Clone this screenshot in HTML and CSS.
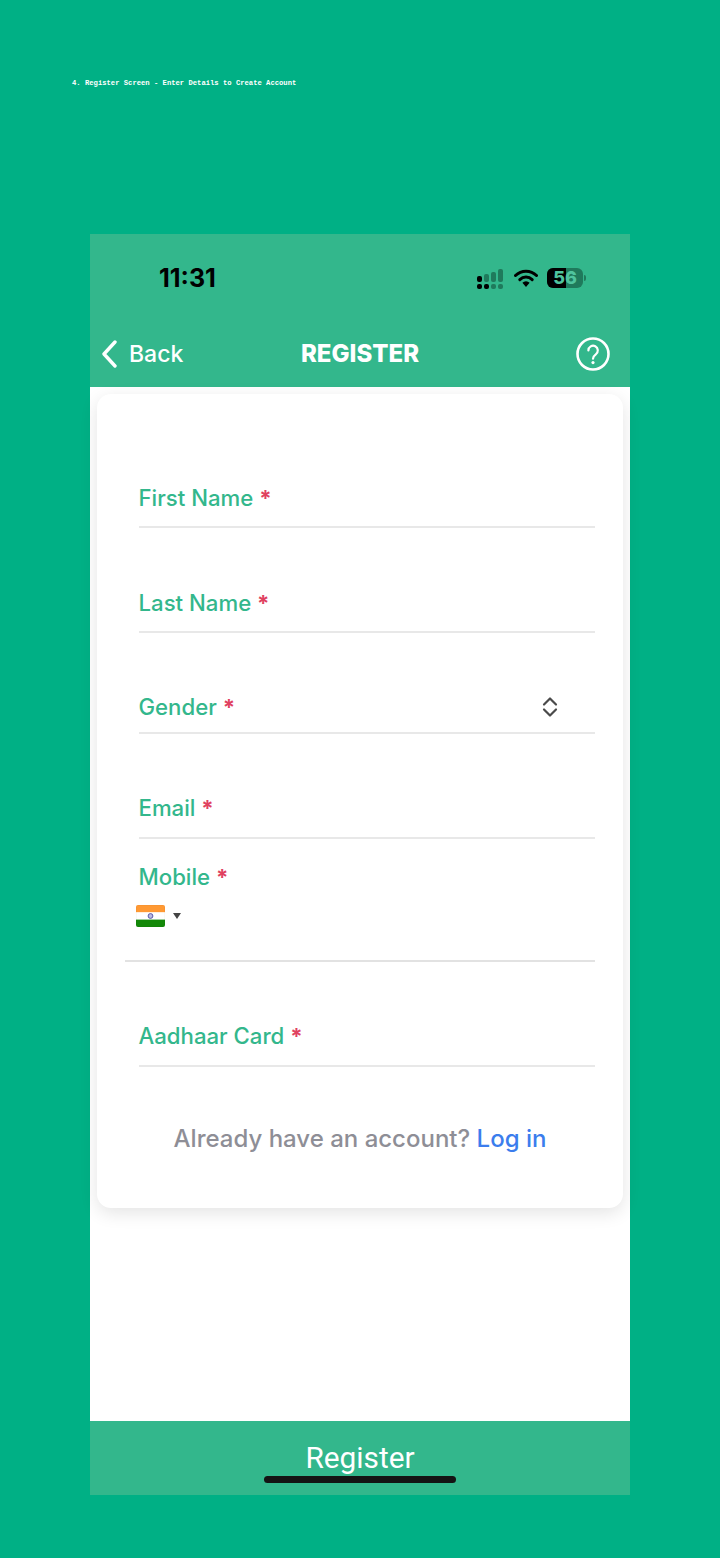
FILE: index.html
```html
<!DOCTYPE html>
<html>
<head>
	<title>Register</title>
	<link rel="stylesheet" href="styles.css">
</head>
<body>
	<p class="caption">4. Register Screen - Enter Details to Create Account</p>
	<div class="phone">
		<div class="topbar">
			<div class="status">
				<span class="time">11:31</span>
				<div class="status-icons">
					<svg class="signal" width="28" height="20" viewBox="0 0 28 20">
						<rect x="0" y="7" width="5" height="6" rx="2" fill="#000"/>
						<rect x="0" y="15" width="5" height="5" rx="2" fill="#000"/>
						<rect x="7" y="15" width="5" height="5" rx="2" fill="#000"/>
						<rect x="7" y="5" width="5" height="8" rx="2" fill="#1f7a5c"/>
						<rect x="14" y="3" width="5" height="10" rx="2" fill="#1f7a5c"/>
						<rect x="21" y="0" width="5" height="13" rx="2" fill="#1f7a5c"/>
						<rect x="14" y="15" width="5" height="5" rx="2" fill="#1f7a5c"/>
						<rect x="21" y="15" width="5" height="5" rx="2" fill="#1f7a5c"/>
					</svg>
					<svg class="wifi" width="24" height="20" viewBox="0 0 24 20">
						<path d="M1.5 7.5a15 15 0 0 1 21 0" fill="none" stroke="#000" stroke-width="3" stroke-linecap="round"/>
						<path d="M5.8 11.6a9 9 0 0 1 12.4 0" fill="none" stroke="#000" stroke-width="3" stroke-linecap="round"/>
						<path d="M8.4 14.8 12 19l3.6-4.2a5 5 0 0 0-7.2 0z" fill="#000"/>
					</svg>
					<div class="battery">
						<div class="battery-body">
							<span class="battery-level"></span>
							<span class="battery-text">56</span>
						</div>
						<span class="battery-tip"></span>
					</div>
				</div>
			</div>
			<div class="nav">
				<div class="back">
					<svg width="16" height="28" viewBox="0 0 16 28">
						<path d="M14 2 3 14l11 12" fill="none" stroke="#fff" stroke-width="3.4" stroke-linecap="round" stroke-linejoin="round"/>
					</svg>
					<span>Back</span>
				</div>
				<h1 class="title">REGISTER</h1>
				<svg class="help" width="34" height="36" viewBox="0 0 34 36">
					<circle cx="17" cy="18" r="15.5" fill="none" stroke="#fff" stroke-width="2.6"/>
					<path d="M12.4 14.4a4.7 4.7 0 1 1 7.4 3.9c-1.8 1.3-2.8 2.2-2.8 4.4" fill="none" stroke="#fff" stroke-width="2.2" stroke-linecap="round"/>
					<circle cx="17" cy="26.6" r="1.6" fill="#fff"/>
				</svg>
			</div>
		</div>
		<div class="content">
			<div class="card">
				<div class="field field-first"><label>First Name <b>*</b></label></div>
				<div class="field field-low"><label>Last Name <b>*</b></label></div>
				<div class="field field-gender">
					<label>Gender <b>*</b></label>
					<svg class="updown" width="16" height="22" viewBox="0 0 16 22">
						<path d="M2 8.5 8 2.5l6 6M2 13.5l6 6 6-6" fill="none" stroke="#4a4a4a" stroke-width="2.2" stroke-linecap="round" stroke-linejoin="round"/>
					</svg>
				</div>
				<div class="field"><label>Email <b>*</b></label></div>
				<div class="mobile">
					<label>Mobile <b>*</b></label>
					<div class="country">
						<svg class="flag" width="29" height="22" viewBox="0 0 29 22">
							<rect width="29" height="7.4" fill="#ff9933"/>
							<rect y="7.4" width="29" height="7.2" fill="#fff"/>
							<rect y="14.6" width="29" height="7.4" fill="#138808"/>
							<circle cx="14.5" cy="11" r="2.4" fill="#b9b9e0" stroke="#5a5aa8" stroke-width="1"/>
							<rect x="0.25" y="0.25" width="28.5" height="21.5" rx="1.5" fill="none" stroke="#000" stroke-opacity="0.08" stroke-width="0.5"/>
						</svg>
						<span class="arrow"></span>
					</div>
				</div>
				<div class="field"><label>Aadhaar Card <b>*</b></label></div>
				<p class="login">Already have an account? <a>Log in</a></p>
			</div>
		</div>
		<div class="footer">
			<span>Register</span>
			<div class="home-bar"></div>
		</div>
	</div>
</body>
</html>
```

FILE: styles.css
```css
body{
	margin: 0;
	height: 1558px;
	overflow: hidden;
	background-color: #00b085;
	font-family: Inter, "Noto Sans", sans-serif;
}
.caption{
	margin: 0;
	padding: 79px 0 0 72px;
	height: 234px;
	box-sizing: border-box;
	font-family: "Liberation Mono", monospace;
	font-size: 7.2px;
	line-height: 9px;
	font-weight: bold;
	color: #fff;
}
.phone{
	position: relative;
	width: 540px;
	height: 1261px;
	margin-left: 90px;
	background-color: #fff;
	display: flex;
	flex-direction: column;
}
.topbar{
	height: 153px;
	background-color: #33b78c;
}
.status{
	height: 86px;
	display: flex;
	justify-content: space-between;
	align-items: center;
	padding: 0 44px 0 69px;
	box-sizing: border-box;
}
.time{
	font-size: 25px;
	font-weight: 700;
	color: #000;
	padding-top: 1px;
}
.status-icons{
	display: flex;
	align-items: center;
	gap: 9px;
	padding-top: 1px;
}
.signal{
	margin-top: 3px;
	margin-right: 1px;
}
.wifi{
	margin-left: -1px;
}
.battery{
	display: flex;
	align-items: center;
	gap: 1px;
}
.battery-body{
	position: relative;
	width: 36px;
	height: 20px;
	border-radius: 6px;
	background-color: #1f7a5c;
	overflow: hidden;
	text-align: center;
	font-size: 18px;
	font-weight: 800;
	line-height: 20px;
	color: #4fc49e;
}
.battery-level{
	position: absolute;
	left: 0;
	top: 0;
	width: 19px;
	height: 20px;
	background-color: #000;
}
.battery-text{
	position: relative;
}
.battery-tip{
	width: 2px;
	height: 6px;
	border-radius: 0 2px 2px 0;
	background-color: #1f7a5c;
}
.nav{
	position: relative;
	height: 67px;
	display: flex;
	justify-content: space-between;
	align-items: center;
	padding: 0 20px 0 11px;
	box-sizing: border-box;
	color: #fff;
}
.back{
	display: flex;
	align-items: center;
	gap: 12px;
	font-size: 23px;
	font-weight: 500;
}
.title{
	position: absolute;
	left: 0;
	right: 0;
	margin: 0;
	text-align: center;
	font-size: 24px;
	font-weight: 800;
}
.content{
	flex: 1;
	padding: 7px;
}
.card{
	height: 814px;
	box-sizing: border-box;
	background-color: #fff;
	border-radius: 14px;
	box-shadow: 0 5px 18px rgba(0,0,0,0.11);
	padding: 0 28px 0 42px;
}
.field{
	height: 105px;
	box-sizing: border-box;
	display: flex;
	justify-content: space-between;
	align-items: flex-end;
	padding-bottom: 15px;
	border-bottom: 2px solid #e8e8e8;
}
.field-first{
	height: 134px;
	padding-bottom: 14px;
}
.field-low{
	padding-bottom: 14px;
}
.field-gender{
	height: 101px;
	padding-bottom: 11px;
	padding-right: 37px;
}
label{
	font-size: 22.2px;
	font-weight: 550;
	line-height: 28px;
	color: #33b78c;
	margin-left: -0.5px;
}
label b{
	color: #e0415f;
	font-weight: 700;
}
.updown{
	margin-bottom: 3px;
}
.mobile{
	height: 123px;
	box-sizing: border-box;
	margin-left: -14px;
	padding: 24px 0 0 14px;
	border-bottom: 2px solid #e2e2e2;
}
.country{
	display: flex;
	align-items: center;
	gap: 8px;
	margin: 14px 0 0 -3px;
}
.flag{
	border-radius: 2px;
}
.arrow{
	width: 0;
	height: 0;
	border-left: 4px solid transparent;
	border-right: 4px solid transparent;
	border-top: 6px solid #444;
}
.login{
	margin: 56px 0 0 -14px;
	text-align: center;
	font-size: 24px;
	line-height: 32px;
	font-weight: 500;
	color: #8e8e96;
}
.login a{
	color: #3b7ded;
}
.footer{
	position: relative;
	height: 74px;
	background-color: #33b78c;
	text-align: center;
	font-family: Roboto, sans-serif;
	font-size: 29.8px;
	font-weight: 450;
	line-height: 74px;
	color: #fff;
}
.home-bar{
	position: absolute;
	left: 174px;
	bottom: 12px;
	width: 192px;
	height: 7px;
	border-radius: 4px;
	background-color: #141414;
}
```
